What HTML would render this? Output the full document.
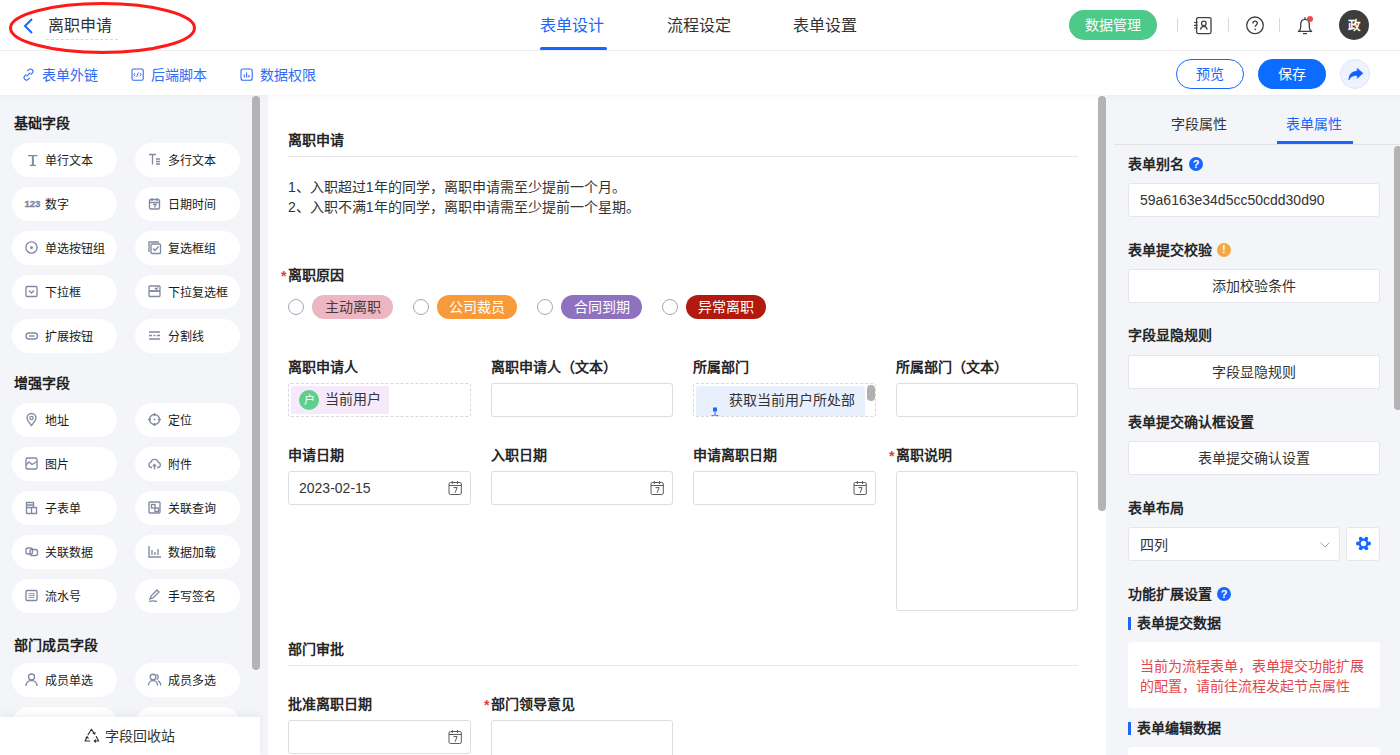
<!DOCTYPE html>
<html lang="zh-CN"><head><meta charset="utf-8">
<style>
*{box-sizing:border-box;margin:0;padding:0}
html,body{width:1400px;height:755px;overflow:hidden;background:#fff;font-family:"Liberation Sans",sans-serif;color:#333}
.a{position:absolute}
.t{position:absolute;white-space:nowrap;line-height:1}
/* header */
#hdr{position:absolute;left:0;top:0;width:1400px;height:51px;border-bottom:1px solid #efefef;background:#fff}
#tb{position:absolute;left:0;top:51px;width:1400px;height:44px;background:#fff;z-index:5;box-shadow:0 1px 6px rgba(0,0,0,0.045)}
#left{position:absolute;left:0;top:95px;width:268px;height:660px;background:#f4f5f9}
#center{position:absolute;left:268px;top:95px;width:838px;height:660px;background:#fff}
#right{position:absolute;left:1106px;top:95px;width:294px;height:660px;background:#f4f5f9}
.pill{position:absolute;width:105px;height:34px;border-radius:17px;background:#fff}
.pill span{position:absolute;left:33px;top:1px;line-height:34px;font-size:12px;color:#1a1a1a;white-space:nowrap}
.pill svg{position:absolute;left:13px;top:10px;overflow:visible}
.sec{position:absolute;left:14px;font-size:14px;font-weight:bold;color:#1f1f1f;line-height:1}
.lbl{position:absolute;font-size:14px;font-weight:bold;color:#262626;line-height:1;white-space:nowrap}
.req{color:#e23c39;font-weight:bold;position:absolute;left:-7px;top:1px;font-size:14px}
.inp{position:absolute;border:1px solid #dcdde1;border-radius:3px;background:#fff}
.rlbl{position:absolute;left:22px;font-size:14px;font-weight:bold;color:#262626;line-height:1;white-space:nowrap}
.rb{position:absolute;width:252px;height:34px;background:#fff;border:1px solid #e3e5ea;border-radius:3px;font-size:14px;color:#333;text-align:center;line-height:32px}
.rbtn{position:absolute;left:22px;width:252px;height:34px;background:#fff;border:1px solid #e3e5ea;border-radius:3px;font-size:14px;color:#333;text-align:center;line-height:32px}
</style></head><body>
<div id="hdr">
  
  <svg class="a" style="left:22px;top:17px" width="14" height="18"><path d="M10 2 L3 9 L10 16" fill="none" stroke="#1a66ff" stroke-width="2"/></svg>
  <div class="t" style="left:48px;top:18px;font-size:16px;color:#333">离职申请</div>
  <div class="a" style="left:46px;top:39px;width:72px;border-top:1px dashed #d8d8d8"></div>
  <div class="t" style="left:540px;top:18px;font-size:16px;color:#1a66ff">表单设计</div>
  <div class="a" style="left:540px;top:47px;width:67px;height:3px;background:#1a66ff;border-radius:2px"></div>
  <div class="t" style="left:667px;top:18px;font-size:16px;color:#333">流程设定</div>
  <div class="t" style="left:793px;top:18px;font-size:16px;color:#333">表单设置</div>
  <div class="a" style="left:1069px;top:10px;width:88px;height:30px;border-radius:15px;background:#4dc98a;color:#fff;font-size:14px;line-height:30px;text-align:center">数据管理</div>
  <div class="a" style="left:1177px;top:18px;width:1px;height:14px;background:#d9d9d9"></div>
  <div class="a" style="left:1228px;top:18px;width:1px;height:14px;background:#d9d9d9"></div>
  <div class="a" style="left:1279px;top:18px;width:1px;height:14px;background:#d9d9d9"></div>

  <svg class="a" style="left:1193px;top:16px" width="20" height="19" viewBox="0 0 20 19"><rect x="3.6" y="1.6" width="14.4" height="16" rx="1.5" stroke="#404040" stroke-width="1.3" fill="none"/><path d="M1 6.5h3.6M1 9.3h3.6M1 12h3.6" stroke="#404040" stroke-width="1.2"/><circle cx="10.8" cy="7.4" r="2.3" stroke="#404040" stroke-width="1.25" fill="none"/><path d="M7.4 13.6c.5-2 1.8-3.2 3.4-3.2s2.9 1.2 3.4 3.2" stroke="#404040" stroke-width="1.25" fill="none"/></svg>
  <svg class="a" style="left:1245px;top:16px" width="20" height="19" viewBox="0 0 20 19"><circle cx="10" cy="9.3" r="8.3" stroke="#404040" stroke-width="1.3" fill="none"/><path d="M7.9 7.4c0-1.4 1-2.3 2.2-2.3s2.2.9 2.2 2.1c0 1.6-2.1 1.8-2.1 3.6" stroke="#404040" stroke-width="1.35" fill="none"/><circle cx="10.2" cy="13.3" r=".85" fill="#404040"/></svg>
  <svg class="a" style="left:1296px;top:15px" width="20" height="20" viewBox="0 0 20 20"><path d="M9 4.4C5.9 4.4 4.7 6.9 4.7 9.6V12.4C4.7 14 3.7 15.4 2.4 16.4H15.6C14.3 15.4 13.3 14 13.3 12.4V9.6C13.3 6.9 12.1 4.4 9 4.4Z" stroke="#404040" stroke-width="1.3" fill="none" stroke-linejoin="round"/><path d="M9 2.2v2M7 18.6h4" stroke="#404040" stroke-width="1.3"/><circle cx="14" cy="4" r="3" fill="#e84c4c"/></svg>
  <div class="a" style="left:1339px;top:10px;width:30px;height:30px;border-radius:15px;background:#3d3d3d;color:#fff;font-size:12.5px;font-weight:bold;line-height:33px;text-align:center">政</div>
</div>
<div id="tb">

  <svg class="a" style="left:22px;top:17px" width="13" height="13" viewBox="0 0 13 13"><path d="M5.3 3.2l1.5-1.5a2.4 2.4 0 0 1 3.4 3.4L8.7 6.6M7.7 9.8L6.2 11.3a2.4 2.4 0 0 1-3.4-3.4l1.5-1.5M4.6 8.4l3.8-3.8" stroke="#2f6bf5" stroke-width="1.1" fill="none"/></svg>
  <svg class="a" style="left:131px;top:17px" width="13" height="13" viewBox="0 0 13 13"><rect x="1" y="1" width="11.2" height="11.2" rx="1.5" stroke="#2f6bf5" stroke-width="1.1" fill="none"/><path d="M4.2 5L2.8 6.6l1.4 1.6M8.8 5l1.4 1.6-1.4 1.6M7.3 4.5L5.7 8.7" stroke="#2f6bf5" stroke-width="1" fill="none"/></svg>
  <svg class="a" style="left:240px;top:17px" width="13" height="13" viewBox="0 0 13 13"><rect x="1" y="1" width="11.2" height="11.2" rx="2" stroke="#2f6bf5" stroke-width="1.1" fill="none"/><path d="M4.3 6.5v3M6.6 4.5v5M8.9 7v2.5" stroke="#2f6bf5" stroke-width="1.1" fill="none"/></svg>
  <div class="t" style="left:42px;top:17px;font-size:14px;color:#2f6bf5">表单外链</div>
  <div class="t" style="left:151px;top:17px;font-size:14px;color:#2f6bf5">后端脚本</div>
  <div class="t" style="left:260px;top:17px;font-size:14px;color:#2f6bf5">数据权限</div>
  <div class="a" style="left:1176px;top:8px;width:68px;height:30px;border-radius:15px;border:1px solid #1a66ff;color:#1a66ff;font-size:14px;line-height:28px;text-align:center">预览</div>
  <div class="a" style="left:1258px;top:8px;width:68px;height:30px;border-radius:15px;background:#0b6cff;color:#fff;font-size:14px;line-height:30px;text-align:center">保存</div>
  <div class="a" style="left:1340px;top:8px;width:30px;height:30px;border-radius:15px;background:#eef3ff;border:1px solid #dce6fb"><svg class="a" style="left:7px;top:8px" width="16" height="13" viewBox="0 0 16 13"><path d="M15 5.2L9.2 0.2v2.9C4.2 3.3 1 6.2 0.8 12 2.5 8.8 5 7.5 9.2 7.6v2.8z" fill="#0f62ff" stroke="#0f62ff" stroke-width="0.5" stroke-linejoin="round"/></svg></div>
</div>
<div id="left">
<div class="sec" style="top:21px">基础字段</div>
<div class="pill" style="left:12px;top:48px"><svg width="13" height="13" viewBox="0 0 13 13"><path d="M3 2.6h9.6M4.8 12.3h6M7.8 2.6v9.7" stroke="#818aa2" stroke-width="1.3" fill="none"/><path d="M7.8 3v9" stroke="#818aa2" stroke-width="1.9"/></svg><span>单行文本</span></div>
<div class="pill" style="left:135px;top:48px"><svg width="13" height="13" viewBox="0 0 13 13"><path d="M1 1.5h7M4.5 1.5v10M8 6h4M8 8.5h4M8 11h4" stroke="#818aa2" stroke-width="1.35" fill="none"/></svg><span>多行文本</span></div>
<div class="pill" style="left:12px;top:92px"><svg width="13" height="13" viewBox="0 0 13 13"><text x="-0.5" y="10" font-size="9.5" font-weight="bold" fill="#7d86a0" stroke="#7d86a0" stroke-width="0.35" font-family="Liberation Sans">123</text></svg><span>数字</span></div>
<div class="pill" style="left:135px;top:92px"><svg width="13" height="13" viewBox="0 0 13 13"><rect x="1.5" y="2.5" width="10" height="9.5" rx="1.5" stroke="#818aa2" stroke-width="1.35" fill="none"/><path d="M1.5 5.5h10M4 1v3M9 1v3M5 7.5h3l-1.5 3" stroke="#818aa2" stroke-width="1.35" fill="none"/></svg><span>日期时间</span></div>
<div class="pill" style="left:12px;top:136px"><svg width="13" height="13" viewBox="0 0 13 13"><circle cx="6.5" cy="6.5" r="5.6" stroke="#818aa2" stroke-width="1.35" fill="none"/><circle cx="6.5" cy="6.5" r="1.5" fill="#8891a7"/></svg><span>单选按钮组</span></div>
<div class="pill" style="left:135px;top:136px"><svg width="13" height="13" viewBox="0 0 13 13"><path d="M1 11V1h10" stroke="#818aa2" stroke-width="1.35" fill="none"/><rect x="3" y="3" width="9.5" height="9.5" rx="1" stroke="#818aa2" stroke-width="1.35" fill="none"/><path d="M5 7.5l2 2 3.5-4" stroke="#818aa2" stroke-width="1.35" fill="none"/></svg><span>复选框组</span></div>
<div class="pill" style="left:12px;top:180px"><svg width="13" height="13" viewBox="0 0 13 13"><rect x="1" y="1.5" width="11" height="10" rx="1" stroke="#818aa2" stroke-width="1.35" fill="none"/><path d="M4 5.5l2.5 2.5 2.5-2.5" stroke="#818aa2" stroke-width="1.35" fill="none"/></svg><span>下拉框</span></div>
<div class="pill" style="left:135px;top:180px"><svg width="13" height="13" viewBox="0 0 13 13"><rect x="1" y="1" width="11" height="5" rx="1" stroke="#818aa2" stroke-width="1.35" fill="none"/><rect x="1" y="6" width="11" height="5.5" rx="1" stroke="#818aa2" stroke-width="1.35" fill="none"/><path d="M7 3l1.3 1.3 1.5-1.8" stroke="#818aa2" stroke-width="1.35" fill="none"/></svg><span>下拉复选框</span></div>
<div class="pill" style="left:12px;top:224px"><svg width="13" height="13" viewBox="0 0 13 13"><rect x="1" y="4" width="11.5" height="6" rx="3" stroke="#818aa2" stroke-width="1.35" fill="none"/><path d="M4 7h5.5" stroke="#818aa2" stroke-width="1.35" fill="none"/></svg><span>扩展按钮</span></div>
<div class="pill" style="left:135px;top:224px"><svg width="13" height="13" viewBox="0 0 13 13"><path d="M1 3h11M1 10h11M1 6.5h3M5.5 6.5h2M9 6.5h3" stroke="#818aa2" stroke-width="1.35" fill="none"/></svg><span>分割线</span></div>
<div class="sec" style="top:281px">增强字段</div>
<div class="pill" style="left:12px;top:308px"><svg width="13" height="13" viewBox="0 0 13 13"><path d="M6.5 12.5C3.5 9 2 6.8 2 5a4.5 4.5 0 0 1 9 0c0 1.8-1.5 4-4.5 7.5z" stroke="#818aa2" stroke-width="1.35" fill="none"/><circle cx="6.5" cy="5" r="1.6" stroke="#818aa2" stroke-width="1.35" fill="none"/></svg><span>地址</span></div>
<div class="pill" style="left:135px;top:308px"><svg width="13" height="13" viewBox="0 0 13 13"><circle cx="6.5" cy="6.5" r="5" stroke="#818aa2" stroke-width="1.35" fill="none"/><path d="M6.5 0v3M6.5 10v3M0 6.5h3M10 6.5h3" stroke="#818aa2" stroke-width="1.35" fill="none"/><circle cx="6.5" cy="6.5" r="1" fill="#8891a7"/></svg><span>定位</span></div>
<div class="pill" style="left:12px;top:352px"><svg width="13" height="13" viewBox="0 0 13 13"><rect x="1" y="1" width="11" height="11" rx="1.5" stroke="#818aa2" stroke-width="1.35" fill="none"/><path d="M1 8l3-3 3 2.5 5-3" stroke="#818aa2" stroke-width="1.35" fill="none"/></svg><span>图片</span></div>
<div class="pill" style="left:135px;top:352px"><svg width="13" height="13" viewBox="0 0 13 13"><path d="M4 10.5H3.2A2.7 2.7 0 0 1 3 5.2a3.7 3.7 0 0 1 7.2 0 2.7 2.7 0 0 1-.2 5.3H9M6.5 12.5V7.5M4.8 9.2l1.7-1.7 1.7 1.7" stroke="#818aa2" stroke-width="1.35" fill="none"/></svg><span>附件</span></div>
<div class="pill" style="left:12px;top:396px"><svg width="13" height="13" viewBox="0 0 13 13"><path d="M1.5 12.5V1.5h7v5M1.5 6.5h10v6h-10M1.5 4h7M6.5 6.5v6" stroke="#818aa2" stroke-width="1.35" fill="none"/></svg><span>子表单</span></div>
<div class="pill" style="left:135px;top:396px"><svg width="13" height="13" viewBox="0 0 13 13"><rect x="1" y="1" width="11" height="11" rx="1" stroke="#818aa2" stroke-width="1.35" fill="none"/><rect x="3.5" y="3.5" width="3.5" height="3.5" stroke="#818aa2" stroke-width="1.35" fill="none"/><rect x="7" y="7" width="3.5" height="3.5" stroke="#818aa2" stroke-width="1.35" fill="none"/></svg><span>关联查询</span></div>
<div class="pill" style="left:12px;top:440px"><svg width="13" height="13" viewBox="0 0 13 13"><rect x="1" y="3" width="6.5" height="6" rx="2" stroke="#818aa2" stroke-width="1.35" fill="none"/><rect x="5" y="4.5" width="7.5" height="6" rx="2" stroke="#818aa2" stroke-width="1.35" fill="none"/></svg><span>关联数据</span></div>
<div class="pill" style="left:135px;top:440px"><svg width="13" height="13" viewBox="0 0 13 13"><path d="M1 1v11h12M4 5v5M7 7v3M10 4v6" stroke="#818aa2" stroke-width="1.35" fill="none"/></svg><span>数据加载</span></div>
<div class="pill" style="left:12px;top:484px"><svg width="13" height="13" viewBox="0 0 13 13"><rect x="1" y="1.5" width="11" height="10" rx="1" stroke="#818aa2" stroke-width="1.35" fill="none"/><path d="M3.5 4.6h6M3.5 6.6h6l-1.5-1M3.5 8.6h6" stroke="#818aa2" stroke-width="0.9" fill="none"/></svg><span>流水号</span></div>
<div class="pill" style="left:135px;top:484px"><svg width="13" height="13" viewBox="0 0 13 13"><path d="M2 10l1-3 6-6 2 2-6 6-3 1zM1 12.5c3-1 5-1 8 0" stroke="#818aa2" stroke-width="1.35" fill="none"/></svg><span>手写签名</span></div>
<div class="sec" style="top:543px">部门成员字段</div>
<div class="pill" style="left:12px;top:568px"><svg width="13" height="13" viewBox="0 0 13 13"><circle cx="6.5" cy="4" r="3" stroke="#818aa2" stroke-width="1.35" fill="none"/><path d="M1 13c0-3.3 2.5-5.5 5.5-5.5S12 9.7 12 13" stroke="#818aa2" stroke-width="1.35" fill="none"/></svg><span>成员单选</span></div>
<div class="pill" style="left:135px;top:568px"><svg width="13" height="13" viewBox="0 0 13 13"><circle cx="5" cy="4" r="2.8" stroke="#818aa2" stroke-width="1.35" fill="none"/><path d="M0.5 12.5c0-3 2-5 4.5-5s4.5 2 4.5 5M8.5 1.5a2.8 2.8 0 0 1 0 5.2M10 8c1.8.8 2.8 2.5 2.8 4.5" stroke="#818aa2" stroke-width="1.35" fill="none"/></svg><span>成员多选</span></div>
<div class="pill" style="left:12px;top:612px"><svg width="13" height="13" viewBox="0 0 13 13"><circle cx="6.5" cy="4" r="3" stroke="#818aa2" stroke-width="1.35" fill="none"/><path d="M1 13c0-3.3 2.5-5.5 5.5-5.5S12 9.7 12 13" stroke="#818aa2" stroke-width="1.35" fill="none"/></svg><span>部门单选</span></div>
<div class="pill" style="left:135px;top:612px"><svg width="13" height="13" viewBox="0 0 13 13"><circle cx="5" cy="4" r="2.8" stroke="#818aa2" stroke-width="1.35" fill="none"/><path d="M0.5 12.5c0-3 2-5 4.5-5s4.5 2 4.5 5M8.5 1.5a2.8 2.8 0 0 1 0 5.2M10 8c1.8.8 2.8 2.5 2.8 4.5" stroke="#818aa2" stroke-width="1.35" fill="none"/></svg><span>部门多选</span></div>
<div class="a" style="left:252px;top:1px;width:8px;height:574px;border-radius:4px;background:#b4b4b4"></div>
<div class="a" style="left:0;top:622px;width:260px;height:38px;background:#fff;box-shadow:0 -3px 8px rgba(0,0,0,0.05)">
 <svg class="a" style="left:84px;top:11px" width="16" height="15" viewBox="0 0 16 15"><path d="M4 6.8L7.5 1.2 10.6 6M9.2 5.2l1.5.9.3-1.6M12.3 8.6l2.4 4.4H10.3M11.6 11.9l-1.3 1.1 1.3 1.1M5.8 13H1l2.3-4.2M2.1 9.6l1.2-.8.9 1.4" stroke="#333" stroke-width="1.15" fill="none" stroke-linejoin="round" stroke-linecap="round"/></svg>
 <div class="t" style="left:105px;top:12px;font-size:14px;color:#333">字段回收站</div>
</div>
</div>
<div id="center">
<div class="lbl" style="left:20px;top:38px">离职申请</div>
<div class="a" style="left:20px;top:61px;width:790px;height:1px;background:#e4e6eb"></div>
<div class="a" style="left:20px;top:82px;font-size:14px;line-height:20px;color:#333;white-space:nowrap">1、入职超过1年的同学，离职申请需至少提前一个月。<br>2、入职不满1年的同学，离职申请需至少提前一个星期。</div>
<div class="lbl" style="left:20px;top:173px"><span class="req">*</span>离职原因</div>
<div class="a" style="left:20px;top:204px;width:16px;height:16px;border-radius:8px;border:1px solid #a3a9b8;background:#fff"></div>
<div class="a" style="left:44px;top:200px;width:81px;height:24px;border-radius:12px;background:#ecb6c2;color:#4a3a3e;font-size:14px;line-height:24px;text-align:center">主动离职</div>
<div class="a" style="left:145px;top:204px;width:16px;height:16px;border-radius:8px;border:1px solid #a3a9b8;background:#fff"></div>
<div class="a" style="left:169px;top:200px;width:80px;height:24px;border-radius:12px;background:#f89a3a;color:#fff;font-size:14px;line-height:24px;text-align:center">公司裁员</div>
<div class="a" style="left:269px;top:204px;width:16px;height:16px;border-radius:8px;border:1px solid #a3a9b8;background:#fff"></div>
<div class="a" style="left:293px;top:200px;width:81px;height:24px;border-radius:12px;background:#8e72c0;color:#fff;font-size:14px;line-height:24px;text-align:center">合同到期</div>
<div class="a" style="left:394px;top:204px;width:16px;height:16px;border-radius:8px;border:1px solid #a3a9b8;background:#fff"></div>
<div class="a" style="left:418px;top:200px;width:80px;height:24px;border-radius:12px;background:#b21a0f;color:#fff;font-size:14px;line-height:24px;text-align:center">异常离职</div>
<div class="lbl" style="left:20px;top:265px">离职申请人</div>
<div class="lbl" style="left:223px;top:265px">离职申请人（文本）</div>
<div class="lbl" style="left:425px;top:265px">所属部门</div>
<div class="lbl" style="left:628px;top:265px">所属部门（文本）</div>
<div class="a" style="left:20px;top:288px;width:183px;height:34px;border:1px dashed #d6d9e0;border-radius:3px;background:#fff"><div class="a" style="left:2px;top:2px;width:98px;height:28px;background:#f5e9fb;border-radius:2px"><div class="a" style="left:8px;top:4px;width:20px;height:20px;border-radius:10px;background:#5fd08a;color:#fff;font-size:11px;line-height:20px;text-align:center">户</div><div class="t" style="left:34px;top:6px;font-size:14px;color:#333">当前用户</div></div></div>
<div class="inp" style="left:223px;top:288px;width:182px;height:34px"></div>
<div class="a" style="left:425px;top:288px;width:183px;height:34px;border:1px dashed #d6d9e0;border-radius:3px;background:#fff;overflow:hidden"><div class="a" style="left:2px;top:2px;width:169px;height:34px;background:#e9f0fd;border-radius:3px"><svg class="a" style="left:11px;top:21px" width="16" height="14" viewBox="0 0 16 14"><rect x="6" y="0.5" width="4" height="4" fill="#1a66ff"/><path d="M8 4.5v3.5M2 12.5q1-4 6-4.5q5 .5 6 4.5" stroke="#4a7cff" stroke-width="1.1" fill="none"/></svg><div class="t" style="left:33px;top:7px;font-size:14px;color:#333">获取当前用户所处部</div></div><div class="a" style="left:173px;top:1px;width:8px;height:16px;border-radius:4px;background:#b0b0b0"></div></div>
<div class="inp" style="left:628px;top:288px;width:182px;height:34px"></div>
<div class="lbl" style="left:20px;top:353px">申请日期</div>
<div class="inp" style="left:20px;top:376px;width:183px;height:34px"><svg class="a" style="right:8px;top:8px" width="15" height="15" viewBox="0 0 15 15"><rect x="2" y="2.5" width="12.3" height="12" rx="1.5" stroke="#5a5a5a" stroke-width="1" fill="none"/><path d="M2 5.5h12.3M5.3 1v3M10.5 1v3M6.5 7.6h3.6l-2 5.2" stroke="#5a5a5a" stroke-width="1" fill="none"/></svg></div>
<div class="lbl" style="left:223px;top:353px">入职日期</div>
<div class="inp" style="left:223px;top:376px;width:182px;height:34px"><svg class="a" style="right:8px;top:8px" width="15" height="15" viewBox="0 0 15 15"><rect x="2" y="2.5" width="12.3" height="12" rx="1.5" stroke="#5a5a5a" stroke-width="1" fill="none"/><path d="M2 5.5h12.3M5.3 1v3M10.5 1v3M6.5 7.6h3.6l-2 5.2" stroke="#5a5a5a" stroke-width="1" fill="none"/></svg></div>
<div class="lbl" style="left:425px;top:353px">申请离职日期</div>
<div class="inp" style="left:425px;top:376px;width:183px;height:34px"><svg class="a" style="right:8px;top:8px" width="15" height="15" viewBox="0 0 15 15"><rect x="2" y="2.5" width="12.3" height="12" rx="1.5" stroke="#5a5a5a" stroke-width="1" fill="none"/><path d="M2 5.5h12.3M5.3 1v3M10.5 1v3M6.5 7.6h3.6l-2 5.2" stroke="#5a5a5a" stroke-width="1" fill="none"/></svg></div>
<div class="t" style="left:31px;top:386px;font-size:14px;color:#333">2023-02-15</div>
<div class="lbl" style="left:628px;top:353px"><span class="req">*</span>离职说明</div>
<div class="inp" style="left:628px;top:376px;width:182px;height:140px"></div>
<div class="lbl" style="left:20px;top:547px">部门审批</div>
<div class="a" style="left:20px;top:570px;width:790px;height:1px;background:#e4e6eb"></div>
<div class="lbl" style="left:20px;top:602px">批准离职日期</div>
<div class="lbl" style="left:223px;top:602px"><span class="req">*</span>部门领导意见</div>
<div class="inp" style="left:20px;top:625px;width:183px;height:34px"><svg class="a" style="right:8px;top:8px" width="15" height="15" viewBox="0 0 15 15"><rect x="2" y="2.5" width="12.3" height="12" rx="1.5" stroke="#5a5a5a" stroke-width="1" fill="none"/><path d="M2 5.5h12.3M5.3 1v3M10.5 1v3M6.5 7.6h3.6l-2 5.2" stroke="#5a5a5a" stroke-width="1" fill="none"/></svg></div>
<div class="inp" style="left:223px;top:625px;width:182px;height:60px"></div>
<div class="a" style="left:830px;top:1px;width:8px;height:415px;border-radius:4px;background:#b4b4b4"></div>
</div><!--c-->
<div id="right">
<div class="t" style="left:65px;top:22px;font-size:14px;color:#333">字段属性</div>
<div class="t" style="left:180px;top:22px;font-size:14px;color:#1a66ff">表单属性</div>
<div class="a" style="left:171px;top:46px;width:76px;height:3px;background:#1a66ff"></div>
<div class="a" style="left:8px;top:49px;width:286px;height:1px;background:#e2e3e6"></div>
<div class="lbl" style="left:22px;top:62px">表单别名</div>
<div class="a" style="left:83px;top:62px;width:14px;height:14px;border-radius:7px;background:#1a66ff;color:#fff;font-size:11px;font-weight:bold;line-height:14px;text-align:center">?</div>
<div class="a" style="left:22px;top:88px;width:252px;height:34px;background:#fff;border:1px solid #e3e5ea;border-radius:3px"><div class="t" style="left:11px;top:9px;font-size:14px;color:#333">59a6163e34d5cc50cdd30d90</div></div>
<div class="lbl" style="left:22px;top:148px">表单提交校验</div>
<div class="a" style="left:111px;top:148px;width:14px;height:14px;border-radius:7px;background:#f3a847;color:#fff;font-size:10px;font-weight:bold;line-height:14px;text-align:center">!</div>
<div class="rb" style="left:22px;top:174px">添加校验条件</div>
<div class="lbl" style="left:22px;top:233px">字段显隐规则</div>
<div class="rb" style="left:22px;top:260px">字段显隐规则</div>
<div class="lbl" style="left:22px;top:320px">表单提交确认框设置</div>
<div class="rb" style="left:22px;top:346px">表单提交确认设置</div>
<div class="lbl" style="left:22px;top:406px">表单布局</div>
<div class="a" style="left:22px;top:432px;width:212px;height:34px;background:#fff;border:1px solid #e3e5ea;border-radius:3px"><div class="t" style="left:11px;top:10px;font-size:14px;color:#333">四列</div><svg class="a" style="left:190px;top:13px" width="12" height="8" viewBox="0 0 12 8"><path d="M1.5 1.5l4.5 4.5 4.5-4.5" stroke="#a8a8a8" stroke-width="1" fill="none"/></svg></div>
<div class="a" style="left:240px;top:432px;width:34px;height:34px;background:#fff;border:1px solid #e3e5ea;border-radius:3px"><svg class="a" style="left:9px;top:8px" width="15" height="15" viewBox="0 0 15 15"><polygon points="12.30,7.50 9.90,11.66 5.10,11.66 2.70,7.50 5.10,3.34 9.90,3.34" fill="#1a66ff" stroke="#1a66ff" stroke-width="1.5" stroke-linejoin="round"/><circle cx="13.10" cy="7.50" r="1.9" fill="#1a66ff"/><circle cx="10.30" cy="12.35" r="1.9" fill="#1a66ff"/><circle cx="4.70" cy="12.35" r="1.9" fill="#1a66ff"/><circle cx="1.90" cy="7.50" r="1.9" fill="#1a66ff"/><circle cx="4.70" cy="2.65" r="1.9" fill="#1a66ff"/><circle cx="10.30" cy="2.65" r="1.9" fill="#1a66ff"/><circle cx="7.5" cy="7.5" r="2.7" fill="#fff"/></svg></div>
<div class="lbl" style="left:22px;top:492px">功能扩展设置</div>
<div class="a" style="left:111px;top:492px;width:14px;height:14px;border-radius:7px;background:#1a66ff;color:#fff;font-size:11px;font-weight:bold;line-height:14px;text-align:center">?</div>
<div class="a" style="left:22px;top:522px;width:3px;height:13px;background:#1a66ff"></div>
<div class="lbl" style="left:31px;top:521px">表单提交数据</div>
<div class="a" style="left:22px;top:547px;width:252px;height:66px;background:#fff;border-radius:4px"><div class="a" style="left:12px;top:14px;width:232px;font-size:14px;line-height:20px;color:#e2474b">当前为流程表单，表单提交功能扩展的配置，请前往流程发起节点属性</div></div>
<div class="a" style="left:22px;top:627px;width:3px;height:13px;background:#1a66ff"></div>
<div class="lbl" style="left:31px;top:626px">表单编辑数据</div>
<div class="a" style="left:22px;top:652px;width:252px;height:66px;background:#fff;border-radius:4px"></div>
<div class="a" style="left:288px;top:51px;width:8px;height:264px;border-radius:4px;background:#b4b4b4"></div>
</div><!--r-->
<svg class="a" style="left:0;top:0;z-index:10" width="220" height="60"><ellipse cx="102.5" cy="28" rx="92" ry="24.5" fill="none" stroke="#ff1a1a" stroke-width="3"/></svg>
</body></html>
